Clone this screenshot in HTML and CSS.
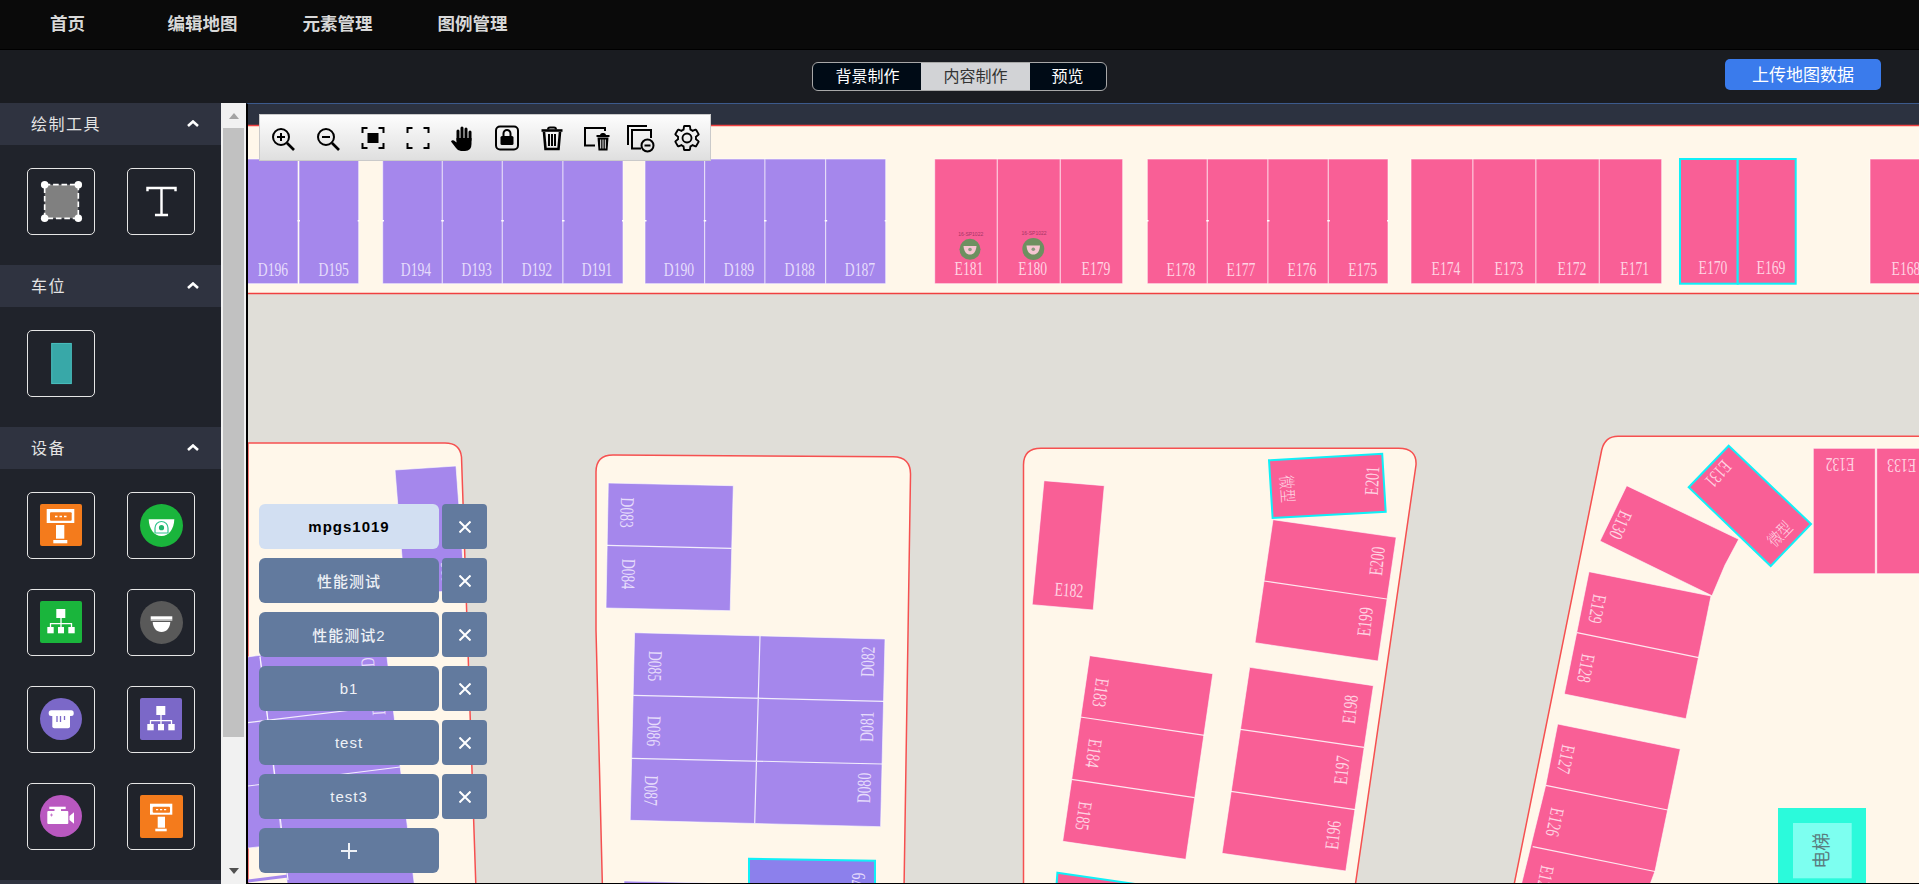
FILE: index.html
```html
<!DOCTYPE html>
<html lang="zh-CN">
  <head>
    <meta charset="utf-8">
    <title>编辑地图</title>
    <link rel="stylesheet" href="styles.css">
  </head>
  <body>
    <div class="nav">
      <a class="nav-item">首页</a>
      <a class="nav-item">编辑地图</a>
      <a class="nav-item">元素管理</a>
      <a class="nav-item">图例管理</a>
    </div>

    <div class="subbar">
      <div class="seg">
        <div class="seg-item">背景制作</div>
        <div class="seg-item active">内容制作</div>
        <div class="seg-item">预览</div>
      </div>
      <button class="upload-btn">上传地图数据</button>
    </div>

    <div class="main">
      <div class="sidebar">
        <div class="sec-head">
          <span>绘制工具</span>
          <svg class="chev" viewBox="0 0 12 7"><path d="M1 6 6 1.5 11 6"/></svg>
        </div>
        <div class="sec-body">
          <div class="tool-btn">
            <svg class="ic" viewBox="0 0 46 46">
              <rect x="5" y="5" width="36" height="36" fill="#808080" stroke="#fff" stroke-width="1.8" stroke-dasharray="6 3"/>
              <circle cx="5" cy="5" r="4" fill="#fff"/><circle cx="41" cy="5" r="4" fill="#fff"/>
              <circle cx="5" cy="41" r="4" fill="#fff"/><circle cx="41" cy="41" r="4" fill="#fff"/>
            </svg>
          </div>
          <div class="tool-btn">
            <svg class="ic" viewBox="0 0 46 46">
              <path d="M8 12V8.500H38V12M23 8.500V37M16 37.500H30" fill="none" stroke="#fff" stroke-width="2.600"/>
            </svg>
          </div>
        </div>

        <div class="sec-head">
          <span>车位</span>
          <svg class="chev" viewBox="0 0 12 7"><path d="M1 6 6 1.5 11 6"/></svg>
        </div>
        <div class="sec-body">
          <div class="tool-btn">
            <svg class="ic" viewBox="0 0 46 46">
              <rect x="12.500" y="1.500" width="21" height="43" fill="#38a8a8" stroke="#4cc6c6"/>
            </svg>
          </div>
        </div>

        <div class="sec-head">
          <span>设备</span>
          <svg class="chev" viewBox="0 0 12 7"><path d="M1 6 6 1.5 11 6"/></svg>
        </div>
        <div class="sec-body">
          <div class="tool-btn">
            <svg class="ic" viewBox="0 0 43 43">
              <rect width="42" height="42" rx="2" fill="#f47b1c"/>
              <rect x="6.700" y="5" width="27.600" height="14" fill="#fff"/>
              <rect x="10" y="8.300" width="21.700" height="8.400" rx="1" fill="#f47b1c"/>
              <path d="M15 12.500h2.500M19.500 12.500H22M24 12.500h2.500" stroke="#fff" stroke-width="1.300"/>
              <rect x="16" y="21" width="8.300" height="13.700" fill="#fff"/>
              <rect x="13.300" y="36" width="14" height="3.300" fill="#fff"/>
            </svg>
          </div>
          <div class="tool-btn">
            <svg class="ic" viewBox="0 0 43 43">
              <circle cx="21.500" cy="21.500" r="21.500" fill="#1ab53c"/>
              <path d="M8.700 15.300H34.300C34 25 29 32 21.500 32S9 25 8.700 15.300Z" fill="#fff"/>
              <path d="M15 29V24a6.500 6.500 0 0 1 13 0V29M15 29H28" fill="none" stroke="#2fc48d" stroke-width="1.200"/>
              <circle cx="21.500" cy="23.700" r="2.600" fill="#1fb56c"/>
            </svg>
          </div>
          <div class="tool-btn">
            <svg class="ic" viewBox="0 0 43 43">
              <rect width="42" height="42" rx="2" fill="#1ab53c"/>
              <rect x="16.300" y="8" width="9" height="9" fill="#fff"/>
              <path d="M21 17V26M10.500 26V22.700H31.500V26" fill="none" stroke="#fff" stroke-width="1.300"/>
              <rect x="7.300" y="26" width="6.400" height="6.300" fill="#fff"/>
              <rect x="18" y="26" width="6" height="6.300" fill="#fff"/>
              <rect x="28.300" y="26" width="6.400" height="6.300" fill="#fff"/>
            </svg>
          </div>
          <div class="tool-btn">
            <svg class="ic" viewBox="0 0 43 43">
              <circle cx="21.500" cy="21.500" r="21.500" fill="#595959"/>
              <rect x="10.700" y="15.300" width="21.600" height="3.400" fill="#fff"/>
              <rect x="10.700" y="18.700" width="21.600" height="1.300" fill="#b8b8b8"/>
              <path d="M12.700 21H30.300C30 27 26.500 31 21.500 31S13 27 12.700 21Z" fill="#fff"/>
            </svg>
          </div>
          <div class="tool-btn">
            <svg class="ic" viewBox="0 0 43 43">
              <circle cx="21" cy="21" r="21" fill="#7b68c8"/>
              <rect x="12.300" y="16" width="17.700" height="14.300" rx="2" fill="#fff"/>
              <rect x="8.700" y="12.300" width="25" height="5.700" rx="2.500" fill="#fff"/>
              <path d="M17 18V24M20.500 18V24M24.500 18V22" stroke="#7b68c8" stroke-width="1.300"/>
            </svg>
          </div>
          <div class="tool-btn">
            <svg class="ic" viewBox="0 0 43 43">
              <rect width="42" height="42" rx="2" fill="#7b68c8"/>
              <rect x="16.300" y="8" width="9" height="9" fill="#fff"/>
              <path d="M21 17V26M10.500 26V22.700H31.500V26" fill="none" stroke="#fff" stroke-width="1.300"/>
              <rect x="7.300" y="26" width="6.400" height="6.300" fill="#fff"/>
              <rect x="18" y="26" width="6" height="6.300" fill="#fff"/>
              <rect x="28.300" y="26" width="6.400" height="6.300" fill="#fff"/>
            </svg>
          </div>
          <div class="tool-btn">
            <svg class="ic" viewBox="0 0 43 43">
              <circle cx="21" cy="21" r="21" fill="#b958c0"/>
              <rect x="9.300" y="11.700" width="16.400" height="2.400" fill="#fff"/>
              <rect x="14.500" y="14" width="6.500" height="2.500" fill="#fff"/>
              <rect x="7.300" y="16" width="21" height="13" rx="1" fill="#fff"/>
              <path d="M29.500 21 34 17.300V28.700L29.500 25Z" fill="#fff"/>
              <path d="M10 20h3M11.500 18.500v3" stroke="#b958c0" stroke-width=".7"/>
            </svg>
          </div>
          <div class="tool-btn">
            <svg class="ic" viewBox="0 0 43 43">
              <rect width="43" height="43" rx="2" fill="#f47b1c"/>
              <rect x="10" y="8.700" width="22.300" height="11" fill="#fff"/>
              <rect x="12.700" y="11.700" width="17.300" height="6" rx="1" fill="#f47b1c"/>
              <path d="M16 14.700h2.200M20 14.700h2.200M24 14.700h2.200" stroke="#fff" stroke-width="1.200"/>
              <rect x="17.700" y="21.700" width="7.300" height="11" fill="#fff"/>
              <rect x="15.300" y="33.700" width="11.400" height="2.600" fill="#fff"/>
            </svg>
          </div>
        </div>
        <div class="sec-head"></div>
      </div>

      <div class="scrollbar">
        <div class="arrow-up"></div>
        <div class="thumb"></div>
        <div class="arrow-down"></div>
      </div>

      <div class="map">
        <svg class="map-svg" viewBox="248 104 1671 779" width="1671" height="779">
          <rect class="band" x="248" y="104" width="1671" height="22"/>
          <rect class="floor" x="248" y="126" width="1671" height="167"/>
          <path class="wall" d="M248 125.500H1919M248 293.500H1919"/>

          <!-- top row -->
          <g class="pur">
            <rect x="240" y="159" width="58" height="124.700"/>
            <rect x="299" y="159" width="59.700" height="124.700"/>
            <rect x="382.700" y="159" width="59.600" height="124.700"/>
            <rect x="442.300" y="159" width="60" height="124.700"/>
            <rect x="502.300" y="159" width="60.700" height="124.700"/>
            <rect x="563" y="159" width="60" height="124.700"/>
            <rect x="645" y="159" width="59.700" height="124.700"/>
            <rect x="704.700" y="159" width="60.300" height="124.700"/>
            <rect x="765" y="159" width="60.700" height="124.700"/>
            <rect x="825.700" y="159" width="60" height="124.700"/>
          </g>
          <g class="pink">
            <rect x="934.700" y="159" width="62.600" height="124.700"/>
            <rect x="997.300" y="159" width="63" height="124.700"/>
            <rect x="1060.300" y="159" width="62.400" height="124.700"/>
            <rect x="1147.300" y="159" width="60" height="124.700"/>
            <rect x="1207.300" y="159" width="60.700" height="124.700"/>
            <rect x="1268" y="159" width="60.300" height="124.700"/>
            <rect x="1328.300" y="159" width="59.700" height="124.700"/>
            <rect x="1411" y="159" width="62" height="124.700"/>
            <rect x="1473" y="159" width="63" height="124.700"/>
            <rect x="1536" y="159" width="63.300" height="124.700"/>
            <rect x="1599.300" y="159" width="62.400" height="124.700"/>
            <rect x="1870" y="159" width="60" height="124.700"/>
          </g>
          <g class="pink sel">
            <rect x="1680" y="159" width="57.700" height="124.700"/>
            <rect x="1737.700" y="159" width="58" height="124.700"/>
          </g>
          <path class="tick" d="M297.500 220.700h2.500M357.700 220.700h2M382 220.700h2M441.300 220.700h2.500M501.300 220.700h2.500M562 220.700h2.500M622 220.700h2M644.500 220.700h2M703.700 220.700h2.500M764 220.700h2.500M824.700 220.700h2.500M884.700 220.700h2M1146.500 220.700h2M1206.300 220.700h2.500M1267 220.700h2.500M1327.300 220.700h2.500M1387 220.700h2"/>
          <g class="lbl pur-lbl">
            <text transform="translate(273 275.500) scale(.7 1)">D196</text>
            <text transform="translate(333.700 275.500) scale(.7 1)">D195</text>
            <text transform="translate(416 275.500) scale(.7 1)">D194</text>
            <text transform="translate(476.700 275.500) scale(.7 1)">D193</text>
            <text transform="translate(537 275.500) scale(.7 1)">D192</text>
            <text transform="translate(597 275.500) scale(.7 1)">D191</text>
            <text transform="translate(679 275.500) scale(.7 1)">D190</text>
            <text transform="translate(739 275.500) scale(.7 1)">D189</text>
            <text transform="translate(799.700 275.500) scale(.7 1)">D188</text>
            <text transform="translate(860 275.500) scale(.7 1)">D187</text>
          </g>
          <g class="lbl pink-lbl">
            <text transform="translate(969 275) scale(.7 1)">E181</text>
            <text transform="translate(1032.700 275) scale(.7 1)">E180</text>
            <text transform="translate(1096 275) scale(.7 1)">E179</text>
            <text transform="translate(1181 275.500) scale(.7 1)">E178</text>
            <text transform="translate(1241 275.500) scale(.7 1)">E177</text>
            <text transform="translate(1302 275.500) scale(.7 1)">E176</text>
            <text transform="translate(1362.700 275.500) scale(.7 1)">E175</text>
            <text transform="translate(1446 275) scale(.7 1)">E174</text>
            <text transform="translate(1509 275) scale(.7 1)">E173</text>
            <text transform="translate(1572 275) scale(.7 1)">E172</text>
            <text transform="translate(1634.700 275) scale(.7 1)">E171</text>
            <text transform="translate(1713 274) scale(.7 1)">E170</text>
            <text transform="translate(1771 274) scale(.7 1)">E169</text>
            <text transform="translate(1906 275) scale(.7 1)">E168</text>
          </g>

          <!-- cameras placed on E181 and E180 -->
          <g>
            <text class="cam-tag" x="970.700" y="236">16-SP1022</text>
            <circle class="cam" cx="970" cy="249.300" r="10.500"/>
            <path class="cam-dome" d="M963.500 246H976.500C976 252 973.500 254.500 970 254.500S964 252 963.500 246Z"/>
            <circle class="cam-eye" cx="970" cy="249.500" r="1.800"/>
            <text class="cam-tag" x="1034" y="235">16-SP1022</text>
            <circle class="cam" cx="1033.300" cy="249" r="11"/>
            <path class="cam-dome" d="M1026.500 245.500H1040C1039.500 252 1037 254.500 1033.300 254.500S1027 252 1026.500 245.500Z"/>
            <circle class="cam-eye" cx="1033.300" cy="249.300" r="1.800"/>
          </g>

          <!-- left block -->
          <path class="block" d="M248 443H445Q460 443 461.500 457L476 890H248Z"/>
          <g class="pur">
            <polygon points="395,470 456,466 465,590 405,594"/>
            <polygon points="240,658 262,655 292,843 240,849"/>
            <polygon points="260,655 386,649 415,890 288,890"/>
          </g>
          <path class="pur-edge" d="M248 881 288 876"/>
          <path class="div" d="M260 657 288 880M248 722.700 393 705M248 786 400 767"/>
          <g class="lbl pur-lbl">
            <text transform="translate(367 652) rotate(-94) scale(.7 1)" y="6.500">D020</text>
            <text transform="translate(378 700) rotate(-94) scale(.7 1)" y="6.500">D021</text>
            <text transform="translate(448 577) rotate(-94) scale(.7 1)" y="6.500">D026</text>
          </g>

          <!-- D block -->
          <path class="block" d="M602.500 890 596 630V472Q596 455 613 455L893 456.700Q911 457 910.500 475L904 890Z"/>
          <g class="pur">
            <polygon points="608.300,483 733.300,485.700 730.200,610.700 606,608"/>
            <polygon points="634.600,632.700 885,639 880.600,826.700 630.200,820.300"/>
            <polygon points="624,881 750,884 750,890 624,890"/>
          </g>
          <path class="div" d="M607 545.300 731.500 548.300M760 635.700 754.700 823.300M633.300 695.300 883.800 701.300M631.500 758.300 882.400 764"/>
          <polygon class="pur-sel" points="749,858.700 875,860.700 875,890 749,890"/>
          <g class="lbl pur-lbl">
            <text transform="translate(627 512.700) rotate(91.500) scale(.7 1)" y="6.500">D083</text>
            <text transform="translate(628.400 574) rotate(91.500) scale(.7 1)" y="6.500">D084</text>
            <text transform="translate(655 666) rotate(91.500) scale(.7 1)" y="6.500">D085</text>
            <text transform="translate(653.800 731) rotate(91.500) scale(.7 1)" y="6.500">D086</text>
            <text transform="translate(651 790.700) rotate(91.500) scale(.7 1)" y="6.500">D087</text>
            <text transform="translate(867.700 661.700) rotate(-88.500) scale(.7 1)" y="6.500">D082</text>
            <text transform="translate(866.800 726.700) rotate(-88.500) scale(.7 1)" y="6.500">D081</text>
            <text transform="translate(864 788) rotate(-88.500) scale(.7 1)" y="6.500">D080</text>
            <text transform="translate(858 888) rotate(-88.500) scale(.7 1)" y="6.500">D079</text>
          </g>

          <!-- E block -->
          <path class="block" d="M1023.500 890V465Q1023.500 448.300 1041 448.300H1398.600Q1417 448.300 1416 465L1354.600 890Z"/>
          <g class="pink">
            <polygon points="1044,480.700 1104.300,485.700 1093.200,610 1032.200,604.700"/>
            <polygon points="1273,519.700 1396.200,537.300 1378,661 1255,642.700"/>
            <polygon points="1249.700,667.300 1373.400,685.700 1345.800,871 1222,853.300"/>
            <polygon points="1089.700,655.700 1212.800,673.700 1185.800,859.300 1062.700,841.300"/>
          </g>
          <path class="div" d="M1263.800 581 1386.900 599M1240.300 729.300 1364 747.300M1231 791.300 1355.200 809.700M1080.300 717 1204.600 735.300M1071.500 779.300 1194.600 797.700"/>
          <g class="pink sel">
            <polygon points="1269,460.300 1382.200,453.700 1385.700,511.700 1272.600,518"/>
            <polygon points="1057.400,872.700 1135,884 1135,892 1056,892"/>
          </g>
          <g class="lbl pink-lbl">
            <text transform="translate(1069 590) rotate(4) scale(.7 1)" y="6.500">E182</text>
            <text transform="translate(1372 480.700) rotate(-87) scale(.7 1)" y="6.500">E201</text>
            <text transform="translate(1377 561) rotate(-84) scale(.7 1)" y="6.500">E200</text>
            <text transform="translate(1365 621.700) rotate(-84) scale(.7 1)" y="6.500">E199</text>
            <text transform="translate(1350 709.300) rotate(-84) scale(.7 1)" y="6.500">E198</text>
            <text transform="translate(1341.700 770) rotate(-84) scale(.7 1)" y="6.500">E197</text>
            <text transform="translate(1333 835) rotate(-84) scale(.7 1)" y="6.500">E196</text>
            <text transform="translate(1100.800 692.700) rotate(98) scale(.7 1)" y="6.500">E183</text>
            <text transform="translate(1093.800 753.300) rotate(98) scale(.7 1)" y="6.500">E184</text>
            <text transform="translate(1083.800 816) rotate(98) scale(.7 1)" y="6.500">E185</text>
            <text class="cjk" transform="translate(1287 489) rotate(86) scale(.8 1)" y="6">微型</text>
          </g>

          <!-- right block -->
          <path class="block" d="M1513 890 1601.700 450Q1605 436.300 1618 436.300H1925V890Z"/>
          <g class="pink">
            <polygon points="1626.700,485.700 1738.700,539.300 1725,565 1712,595.700 1600,541"/>
            <polygon points="1589,571.700 1711,596 1686,718.700 1564.300,694"/>
            <polygon points="1557.700,724 1680.300,749 1655,871 1648,890 1520,890 1545.700,785.300"/>
            <rect x="1813.300" y="448.300" width="62" height="125.400"/>
            <rect x="1876.700" y="448.300" width="62" height="125.400"/>
          </g>
          <path class="div" d="M1577 632.700 1698.700 657.700M1545.700 785.300 1667.700 810M1532.700 846.700 1655 871.500"/>
          <g class="pink sel">
            <polygon points="1728.700,445.700 1811,524 1770.700,566 1688.700,487.300"/>
          </g>
          <g class="lbl pink-lbl">
            <text transform="translate(1620.500 525) rotate(114) scale(.7 1)" y="6.500">E130</text>
            <text transform="translate(1718.300 474) rotate(132) scale(.7 1)" y="6.500">E131</text>
            <text class="cjk" transform="translate(1780 534) rotate(-46) scale(.8 1)" y="6">微型</text>
            <text transform="translate(1597.300 609) rotate(101) scale(.7 1)" y="6.500">E129</text>
            <text transform="translate(1586 668.300) rotate(101) scale(.7 1)" y="6.500">E128</text>
            <text transform="translate(1566 759.300) rotate(102) scale(.7 1)" y="6.500">E127</text>
            <text transform="translate(1555 822.300) rotate(102) scale(.7 1)" y="6.500">E126</text>
            <text transform="translate(1545 880) rotate(102) scale(.7 1)" y="6.500">E125</text>
            <text transform="translate(1840 464.300) rotate(180) scale(.7 1)" y="6.500">E132</text>
            <text transform="translate(1901.700 466) rotate(180) scale(.7 1)" y="6.500">E133</text>
          </g>

          <!-- lift -->
          <rect class="lift" x="1778" y="808" width="88" height="80"/>
          <rect class="lift-in" x="1793" y="823" width="58.700" height="55.300"/>
          <text class="lift-txt" transform="translate(1822 850.700) rotate(-90)" y="6">电梯</text>
        </svg>

        <div class="toolbar">
          <div class="tb-item">
            <svg viewBox="0 0 30 30"><circle class="ln" cx="13" cy="14" r="8"/><path class="ln" d="M9 14H17M13 10V18"/><path class="hv" d="M19 20 26 27"/></svg>
          </div>
          <div class="tb-item">
            <svg viewBox="0 0 30 30"><circle class="ln" cx="13" cy="14" r="8"/><path class="ln" d="M9 14H17"/><path class="hv" d="M19 20 26 27"/></svg>
          </div>
          <div class="tb-item">
            <svg viewBox="0 0 30 30"><path class="ln" d="M9.500 5H4.500V10M20.500 5H25.500V10M9.500 25H4.500V20M20.500 25H25.500V20"/><rect x="9.500" y="10" width="11" height="10"/></svg>
          </div>
          <div class="tb-item">
            <svg viewBox="0 0 30 30"><path class="ln" d="M9.500 5H4.500V10M20.500 5H25.500V10M9.500 25H4.500V20M20.500 25H25.500V20"/></svg>
          </div>
          <div class="tb-item">
            <svg viewBox="0 0 30 30">
              <path class="hv rnd" d="M10 8V17M14 5V16M18 6V16M22 9V17"/>
              <path d="M8.500 15H23.500V21Q23.500 28 17 28H13Q10 28 8 25L3 18.500Q4 16.500 6 17.500L8.500 19.500Z"/>
            </svg>
          </div>
          <div class="tb-item">
            <svg viewBox="0 0 30 30">
              <rect class="ln" x="4" y="3.500" width="22" height="23" rx="4"/>
              <rect x="8.500" y="13" width="13" height="9" rx="1.500"/>
              <path class="ln" d="M11.500 13V10.500a3.500 3.500 0 0 1 7 0V13"/>
            </svg>
          </div>
          <div class="tb-item">
            <svg viewBox="0 0 30 30">
              <path class="hv" d="M4.500 7.500H25.500"/>
              <path class="ln" d="M11 6.500Q11 4.500 13 4.500H17Q19 4.500 19 6.500"/>
              <path class="hv" d="M7 9 8.500 26H21.500L23 9"/>
              <path class="ln" d="M12 11V23M15 11V23M18 11V23"/>
            </svg>
          </div>
          <div class="tb-item">
            <svg viewBox="0 0 30 30">
              <path class="ln" d="M23 8V5H3V22.500H13"/>
              <path class="ln" d="M14.500 13H27.500"/>
              <path class="ln" d="M19 12.500Q19 11 20.500 11H21.500Q23 11 23 12.500"/>
              <path d="M15.500 14.500H26.500L25.500 27.500H16.500Z"/>
              <path class="cut" d="M18.700 16.500V25.500M21 16.500V25.500M23.300 16.500V25.500"/>
            </svg>
          </div>
          <div class="tb-item">
            <svg viewBox="0 0 30 30">
              <path class="ln" d="M20 3H1V22"/>
              <path class="ln" d="M14 25.500H5V7H24V15"/>
              <circle class="ln" cx="20.500" cy="22.500" r="6"/>
              <path class="ln" d="M17.500 22.500H23.500"/>
            </svg>
          </div>
          <div class="tb-item">
            <svg viewBox="0 0 24 24"><path class="gear" d="M19.140 12.940c.04-.3.060-.61.060-.94 0-.32-.02-.64-.07-.94l2.030-1.580c.18-.14.230-.41.120-.61l-1.920-3.320c-.12-.22-.37-.29-.59-.22l-2.390.96c-.5-.38-1.030-.7-1.620-.94l-.36-2.540c-.04-.24-.24-.41-.48-.41h-3.840c-.24 0-.43.170-.47.41l-.36 2.540c-.59.240-1.130.570-1.620.94l-2.390-.96c-.22-.08-.47 0-.59.220L2.740 8.870c-.12.210-.08.470.12.610l2.030 1.580c-.05.300-.09.630-.09.940s.02.640.07.940l-2.030 1.580c-.18.140-.23.410-.12.610l1.920 3.320c.12.220.37.290.59.220l2.390-.96c.5.380 1.030.7 1.620.94l.36 2.540c.05.240.24.410.48.410h3.840c.24 0 .44-.17.47-.41l.36-2.540c.59-.24 1.130-.56 1.620-.94l2.390.96c.22.080.47 0 .59-.22l1.920-3.320c.12-.22.070-.47-.12-.61l-2.010-1.580zM12 15.600c-1.980 0-3.600-1.620-3.600-3.600s1.620-3.600 3.600-3.600 3.600 1.620 3.600 3.600-1.620 3.600-3.600 3.600z"/></svg>
          </div>
        </div>

        <div class="layers">
          <div class="layer-row">
            <div class="layer-name active">mpgs1019</div>
            <div class="layer-del"><svg viewBox="0 0 12 12"><path d="M.5.5 11.500 11.500M11.500.5.5 11.500"/></svg></div>
          </div>
          <div class="layer-row">
            <div class="layer-name">性能测试</div>
            <div class="layer-del"><svg viewBox="0 0 12 12"><path d="M.5.5 11.500 11.500M11.500.5.5 11.500"/></svg></div>
          </div>
          <div class="layer-row">
            <div class="layer-name">性能测试2</div>
            <div class="layer-del"><svg viewBox="0 0 12 12"><path d="M.5.5 11.500 11.500M11.500.5.5 11.500"/></svg></div>
          </div>
          <div class="layer-row">
            <div class="layer-name">b1</div>
            <div class="layer-del"><svg viewBox="0 0 12 12"><path d="M.5.5 11.500 11.500M11.500.5.5 11.500"/></svg></div>
          </div>
          <div class="layer-row">
            <div class="layer-name">test</div>
            <div class="layer-del"><svg viewBox="0 0 12 12"><path d="M.5.5 11.500 11.500M11.500.5.5 11.500"/></svg></div>
          </div>
          <div class="layer-row">
            <div class="layer-name">test3</div>
            <div class="layer-del"><svg viewBox="0 0 12 12"><path d="M.5.5 11.500 11.500M11.500.5.5 11.500"/></svg></div>
          </div>
          <div class="layer-row">
            <div class="layer-name"><svg class="plus" viewBox="0 0 16 16"><path d="M8 0V16M0 8H16"/></svg></div>
          </div>
        </div>
      </div>
    </div>
  </body>
</html>
```

FILE: styles.css
```css
* {
  box-sizing: border-box;
}
html, body {
  height: 100%;
}
body {
  margin: 0;
  height: 884px;
  overflow: hidden;
  display: flex;
  flex-direction: column;
  background-color: #1a1c21;
  font-family: "Liberation Sans", "Noto Sans CJK SC", sans-serif;
}

/* top nav */
.nav {
  flex: none;
  height: 50px;
  display: flex;
  align-items: center;
  background-color: #0a0a0a;
  border-bottom: 1px solid #000;
}
.nav-item {
  width: 135px;
  text-align: center;
  font-size: 17.500px;
  font-weight: bold;
  color: #d8d8d8;
  padding-bottom: 4px;
}

/* second bar */
.subbar {
  flex: none;
  height: 53px;
  display: grid;
  grid-template-columns: 1fr auto 1fr;
  align-items: start;
  padding-top: 9px;
  background-color: #1a1c21;
}
.seg {
  grid-column: 2;
  margin-top: 3px;
  height: 29px;
  display: flex;
  border: 1px solid #a8a8a8;
  border-radius: 6px;
  overflow: hidden;
  background-color: #000b16;
}
.seg-item {
  padding: 0 22px;
  font-size: 16px;
  line-height: 28px;
  color: #fff;
}
.seg-item.active {
  background-color: #d2d3d6;
  color: #333;
}
.upload-btn {
  grid-column: 3;
  justify-self: end;
  width: 156px;
  height: 31px;
  margin-right: 38px;
  border: none;
  border-radius: 5px;
  background-color: #3a7bec;
  color: #fff;
  font-family: inherit;
  font-size: 17px;
  padding: 0 0 2px;
}

/* main area */
.main {
  flex: 1;
  display: flex;
  min-height: 0;
}
.sidebar {
  flex: none;
  width: 221px;
  background-color: #20232b;
  overflow: hidden;
}
.sec-head {
  height: 42px;
  padding: 0 22px 2px 31px;
  display: flex;
  align-items: center;
  justify-content: space-between;
  background-color: #2f3340;
  color: #e4e4e4;
  font-size: 16px;
  letter-spacing: 1.500px;
}
.chev {
  width: 12px;
  height: 7px;
  fill: none;
  stroke: #fff;
  stroke-width: 2.600;
}
.sec-body {
  padding: 23px 27px 30px;
  display: grid;
  grid-template-columns: 68px 68px;
  grid-auto-rows: 67px;
  column-gap: 32px;
  row-gap: 30px;
}
.tool-btn {
  display: flex;
  align-items: center;
  justify-content: center;
  border: 1px solid #e6e6e6;
  border-radius: 5px;
}
.ic {
  width: 43px;
  height: 43px;
}
.scrollbar {
  flex: none;
  width: 25px;
  padding: 0 2px;
  display: flex;
  flex-direction: column;
  align-items: center;
  background-color: #f1f1f1;
}
.arrow-up {
  margin-top: 10px;
  border-left: 5.500px solid transparent;
  border-right: 5.500px solid transparent;
  border-bottom: 6px solid #a3a3a3;
}
.thumb {
  width: 21px;
  height: 609px;
  margin-top: 9px;
  background-color: #c1c1c1;
}
.arrow-down {
  margin-top: auto;
  margin-bottom: 10px;
  border-left: 5.500px solid transparent;
  border-right: 5.500px solid transparent;
  border-top: 6px solid #505050;
}

/* map canvas */
.map {
  flex: 1;
  position: relative;
  min-width: 0;
  background-color: #e0ded8;
  border-left: 2px solid #000;
  border-top: 1px solid #3c5a8c;
  border-bottom: 1px solid #000;
  overflow: hidden;
}
.map-svg {
  display: block;
}
.band {
  fill: #2c3240;
}
.floor,
.block {
  fill: #fff7ea;
}
.wall {
  fill: none;
  stroke: #f04040;
  stroke-width: 1.500;
}
.block {
  stroke: #f65050;
  stroke-width: 1.500;
}
.pur rect,
.pur polygon {
  fill: #a587ec;
  stroke: rgba(255, 255, 255, .6);
  stroke-width: 1;
}
.pink rect,
.pink polygon {
  fill: #f95f96;
  stroke: rgba(255, 255, 255, .6);
  stroke-width: 1;
}
.pink.sel rect,
.pink.sel polygon {
  stroke: #10f0f8;
  stroke-width: 2;
}
.pur-sel {
  fill: #8c80ec;
  stroke: #10f0f8;
  stroke-width: 2;
}
.pur-edge {
  fill: none;
  stroke: #a587ec;
  stroke-width: 3;
}
.tick {
  fill: none;
  stroke: #fff;
  stroke-width: 1.500;
}
.div {
  fill: none;
  stroke: #fff;
  stroke-width: 1.200;
  opacity: .85;
}
.lbl {
  font-family: "Liberation Serif", "Noto Sans CJK SC", serif;
  font-size: 19.500px;
  text-anchor: middle;
}
.pur-lbl {
  fill: #e6dcfb;
}
.pink-lbl {
  fill: #ffd3e2;
}
.cjk {
  font-family: "Noto Sans CJK SC", sans-serif;
  font-size: 17px;
  font-weight: 300;
}
.cam {
  fill: #6d9060;
}
.cam-dome {
  fill: #f6c6d2;
}
.cam-eye {
  fill: #8a9a80;
}
.cam-tag {
  font-family: "Liberation Sans", sans-serif;
  font-size: 5px;
  text-anchor: middle;
  fill: #a53564;
}
.lift {
  fill: #2bfadb;
}
.lift-in {
  fill: #7dfff0;
}
.lift-txt {
  font-family: "Noto Sans CJK SC", sans-serif;
  font-size: 18px;
  text-anchor: middle;
  fill: #5a7d80;
}

/* floating toolbar */
.toolbar {
  position: absolute;
  left: 11px;
  top: 10px;
  width: 452px;
  height: 47px;
  padding: 0 1px;
  display: flex;
  align-items: center;
  background: linear-gradient(#fdfdfd, #dfdfdf);
  border: 1px solid #cacaca;
}
.tb-item {
  flex: 1;
  display: flex;
  align-items: center;
  justify-content: center;
}
.tb-item svg {
  width: 30px;
  height: 30px;
}
.ln,
.hv,
.cut,
.gear {
  fill: none;
  stroke: #000;
}
.ln {
  stroke-width: 2;
}
.hv {
  stroke-width: 2.600;
}
.rnd {
  stroke-width: 3;
  stroke-linecap: round;
}
.cut {
  stroke: #efefef;
  stroke-width: 1;
}
.gear {
  stroke-width: 1.500;
}

/* floor list */
.layers {
  position: absolute;
  left: 11px;
  top: 400px;
  display: flex;
  flex-direction: column;
  gap: 9px;
}
.layer-row {
  display: flex;
  gap: 3px;
}
.layer-name {
  width: 180px;
  height: 45px;
  display: flex;
  align-items: center;
  justify-content: center;
  border-radius: 6px;
  background-color: #627a9e;
  color: #eef1f6;
  font-size: 15px;
  font-weight: 500;
  letter-spacing: 1px;
}
.layer-name.active {
  background-color: #d2dff2;
  color: #000;
  font-weight: bold;
}
.layer-del {
  width: 45px;
  height: 45px;
  display: flex;
  align-items: center;
  justify-content: center;
  border-radius: 4px;
  background-color: #627a9e;
}
.layer-del svg {
  width: 12px;
  height: 12px;
  fill: none;
  stroke: #fff;
  stroke-width: 2;
}
.plus {
  width: 16px;
  height: 16px;
  fill: none;
  stroke: #eef1f6;
  stroke-width: 2;
}
```
